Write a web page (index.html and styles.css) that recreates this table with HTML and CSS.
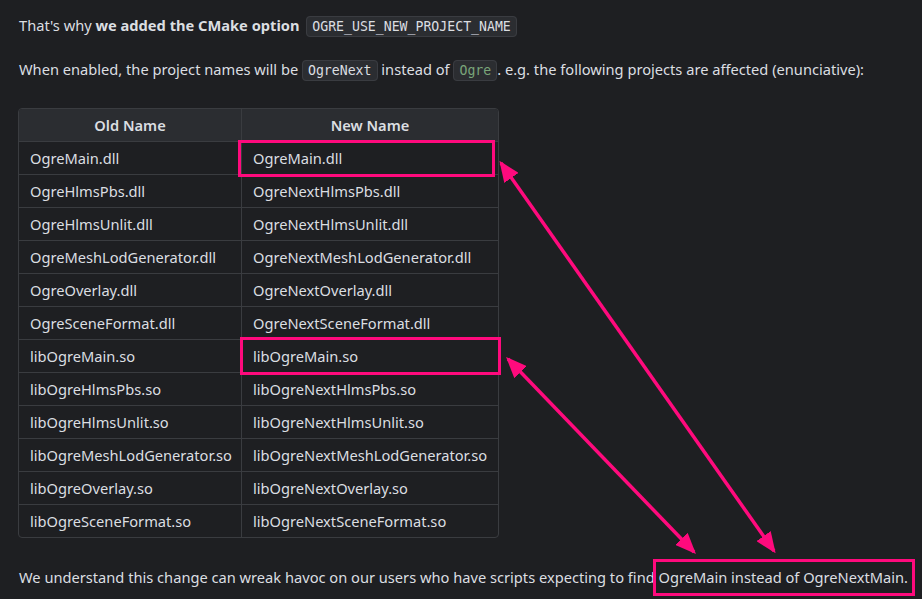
FILE: index.html
```html
<!DOCTYPE html>
<html>
<head>
<meta charset="utf-8">
<link rel="stylesheet" href="styles.css">
</head>
<body>
<div class="page">
  <p class="p1">That's why <strong>we added the CMake option</strong> <code>OGRE_USE_NEW_PROJECT_NAME</code></p>
  <p class="p2">When enabled, the project names will be <code>OgreNext</code> instead of <code class="green">Ogre</code>. e.g. the following projects are affected (enunciative):</p>
  <div class="tablewrap">
    <table>
      <thead><tr><th class="c1">Old Name</th><th class="c2">New Name</th></tr></thead>
      <tbody>
        <tr><td>OgreMain.dll</td><td>OgreMain.dll</td></tr>
        <tr><td>OgreHlmsPbs.dll</td><td>OgreNextHlmsPbs.dll</td></tr>
        <tr><td>OgreHlmsUnlit.dll</td><td>OgreNextHlmsUnlit.dll</td></tr>
        <tr><td>OgreMeshLodGenerator.dll</td><td>OgreNextMeshLodGenerator.dll</td></tr>
        <tr><td>OgreOverlay.dll</td><td>OgreNextOverlay.dll</td></tr>
        <tr><td>OgreSceneFormat.dll</td><td>OgreNextSceneFormat.dll</td></tr>
        <tr><td>libOgreMain.so</td><td>libOgreMain.so</td></tr>
        <tr><td>libOgreHlmsPbs.so</td><td>libOgreNextHlmsPbs.so</td></tr>
        <tr><td>libOgreHlmsUnlit.so</td><td>libOgreNextHlmsUnlit.so</td></tr>
        <tr><td>libOgreMeshLodGenerator.so</td><td>libOgreNextMeshLodGenerator.so</td></tr>
        <tr><td>libOgreOverlay.so</td><td>libOgreNextOverlay.so</td></tr>
        <tr><td>libOgreSceneFormat.so</td><td>libOgreNextSceneFormat.so</td></tr>
      </tbody>
    </table>
  </div>
  <p class="p3">We understand this change can wreak havoc on our users who have scripts expecting to find OgreMain instead of OgreNextMain.</p>
</div>
<div class="hl hl1"></div>
<div class="hl hl2"></div>
<div class="hl hl3"></div>
<svg class="arrows" width="922" height="599" viewBox="0 0 922 599">
  <defs>
    <marker id="ah" markerWidth="6" markerHeight="5" refX="5.2" refY="2.5" orient="auto-start-reverse" markerUnits="strokeWidth">
      <path d="M0,0 L6,2.5 L0,5 Z" fill="#ff0a7d"/>
    </marker>
  </defs>
  <line x1="501" y1="163" x2="774" y2="551" stroke="#ff0a7d" stroke-width="3.5" marker-start="url(#ah)" marker-end="url(#ah)"/>
  <line x1="508" y1="359" x2="694" y2="552" stroke="#ff0a7d" stroke-width="3.5" marker-start="url(#ah)" marker-end="url(#ah)"/>
</svg>
</body>
</html>
```
FILE: styles.css
```css
html, body {
  margin: 0;
  padding: 0;
  background: #1e1f22;
  width: 922px;
  height: 599px;
  overflow: hidden;
}
body {
  position: relative;
  color: #dbdee1;
  font-family: "Noto Sans", "Open Sans", sans-serif;
  font-size: 14.65px;
}
.page {
  padding: 0 0 0 19px;
}
p {
  margin: 0;
  line-height: 24px;
  white-space: nowrap;
}
.p1 {
  padding-top: 13px;
}
.p2 {
  margin-top: 18px;
}
.p3 {
  margin-top: 27px;
}
strong {
  font-weight: 700;
}
strong + code {
  margin-left: 3px;
}
code {
  font-family: "DejaVu Sans Mono", "Liberation Mono", monospace;
  font-size: 13.2px;
  background: #2b2d31;
  border: 1px solid #3a3c41;
  border-radius: 4px;
  padding: 2px 5px;
  color: #dbdee1;
}
code.green {
  color: #7aa57a;
}
.tablewrap {
  margin-top: 25px;
  width: 479px;
  margin-left: -1px;
  border: 1px solid #3a3c40;
  border-radius: 4px;
  overflow: hidden;
}
table {
  border-collapse: collapse;
  width: 100%;
  table-layout: fixed;
}
th.c1 { width: 200px; }
th {
  background: #2b2d31;
  font-weight: 600;
  text-align: center;
  height: 32px;
  padding: 0 11px;
  border-bottom: 1px solid #3a3c40;
}
td {
  height: 32px;
  padding: 0 11px;
  text-align: left;
  white-space: nowrap;
  border-top: 1px solid #3a3c40;
}
th + th, td + td {
  border-left: 1px solid #3a3c40;
}
tbody tr:first-child td { border-top: none; }
.hl {
  position: absolute;
  border: 3px solid #ff0a7d;
  box-sizing: border-box;
}
.hl1 { left: 238px; top: 140px; width: 257px; height: 37px; }
.hl2 { left: 240px; top: 337px; width: 261px; height: 38px; }
.hl3 { left: 653px; top: 559px; width: 262px; height: 37px; }
.arrows {
  position: absolute;
  left: 0;
  top: 0;
  pointer-events: none;
}
```
